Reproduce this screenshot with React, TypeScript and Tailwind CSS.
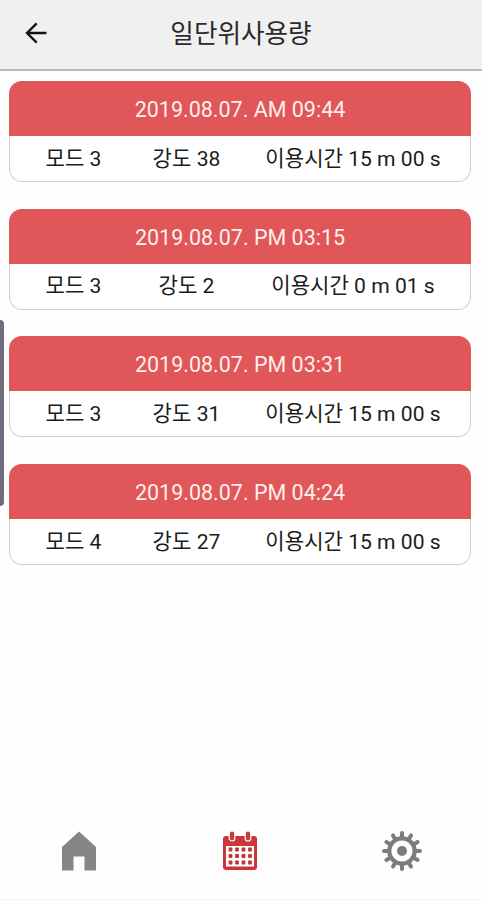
interface UsageRecord {
  date: string;
  mode: number;
  strength: number;
  time: string;
}

const records: UsageRecord[] = [
  { date: "2019.08.07. AM 09:44", mode: 3, strength: 38, time: "15 m 00 s" },
  { date: "2019.08.07. PM 03:15", mode: 3, strength: 2, time: "0 m 01 s" },
  { date: "2019.08.07. PM 03:31", mode: 3, strength: 31, time: "15 m 00 s" },
  { date: "2019.08.07. PM 04:24", mode: 4, strength: 27, time: "15 m 00 s" },
];

const BackIcon = () => (
  <svg
    className="size-6"
    viewBox="0 0 24 24"
    fill="none"
    stroke="#111"
    strokeWidth="2.4"
  >
    <path d="M22.500 12H3M12.700 2.300L3 12l9.700 9.700" />
  </svg>
);

const HomeIcon = () => (
  <svg width="36" height="40" viewBox="0 0 36 40">
    <path
      d="M18 .5L35 16v23.500H23.500V25.500h-11v14H1V16z"
      fill="#858585"
    />
  </svg>
);

const CalendarIcon = () => (
  <svg width="36" height="40" viewBox="0 0 36 40">
    <path
      d="M4 5h28a3 3 0 0 1 3 3v28a3 3 0 0 1-3 3H4a3 3 0 0 1-3-3V8a3 3 0 0 1 3-3z"
      fill="#cb363b"
    />
    <path d="M4 15h28v20.500H4z" fill="#fff" />
    {/* Binder rings */}
    {[10, 26].map((x) => (
      <rect
        key={x}
        x={x - 2.8}
        y="0"
        width="5.600"
        height="10"
        rx="2.800"
        fill="#cb363b"
        stroke="#fff"
        strokeWidth="1.200"
      />
    ))}
    {/* Days */}
    {[18.5, 25, 31.5].map((y) =>
      [8.5, 15, 21.5, 28].map((x) => (
        <rect
          key={`${x}-${y}`}
          x={x - 1.9}
          y={y - 1.9}
          width="3.800"
          height="3.800"
          rx=".6"
          fill="#c4323a"
        />
      ))
    )}
  </svg>
);

const SettingsIcon = () => (
  <svg width="40" height="40" viewBox="0 0 40 40">
    {Array.from({ length: 12 }, (_, i) => (
      <line
        key={i}
        x1="20"
        y1="2"
        x2="20"
        y2="7"
        stroke="#7c7c7c"
        strokeWidth="4"
        strokeLinecap="round"
        transform={`rotate(${i * 30} 20 20)`}
      />
    ))}
    <circle
      cx="20"
      cy="20"
      r="12.700"
      fill="none"
      stroke="#7c7c7c"
      strokeWidth="4.200"
    />
    <circle cx="20" cy="20" r="5" fill="#7c7c7c" />
  </svg>
);

const UsageCard = ({ record }: { record: UsageRecord }) => (
  <article className="h-[101px] shrink-0 overflow-hidden rounded-[13px] bg-[#cfcfcf] p-px pt-0">
    <div className="-mx-px flex h-[55px] items-center justify-center bg-[#e05659] pt-[3px] text-[21.5px] text-[#fff0ee]">
      <p className="whitespace-nowrap">{record.date}</p>
    </div>
    <div className="flex h-[45px] items-center rounded-b-[12px] bg-white text-center text-[21.1px] whitespace-nowrap text-[#1c1c1c]">
      <p className="w-[127px]">모드 {record.mode}</p>
      <p className="w-[99px]">강도 {record.strength}</p>
      <p className="flex-1">이용시간 {record.time}</p>
    </div>
  </article>
);

const App = () => {
  return (
    <div className="relative flex h-[900px] w-[482px] flex-col overflow-hidden bg-[#fefefe] font-[Roboto,'Noto_Sans_CJK_KR',sans-serif]">
      <header className="grid h-[71px] shrink-0 grid-cols-[1fr_auto_1fr] items-center border-b-2 border-[#b9b9b9] bg-[#f0f0f0] px-6 pb-1">
        <button type="button" aria-label="뒤로" className="w-6">
          <BackIcon />
        </button>
        <h1 className="pt-1 text-[25.6px] text-[#2a2a2a]">일단위사용량</h1>
      </header>

      <main className="flex flex-1 flex-col gap-[26.67px] pt-[10px] pr-[11px] pl-[9px]">
        {records.map((record) => (
          <UsageCard key={record.date} record={record} />
        ))}
      </main>

      {/* Edge panel handle */}
      <div className="absolute top-[320px] left-0 h-[186px] w-[4px] rounded-r-[4px] bg-[#706b7d]" />

      <nav className="flex h-[97px] shrink-0 justify-between border-b border-[#f3f3f3] pt-[28px] pr-[60px] pl-[61px]">
        <button type="button" aria-label="홈" className="h-10">
          <HomeIcon />
        </button>
        <button type="button" aria-label="사용량" className="h-10">
          <CalendarIcon />
        </button>
        <button type="button" aria-label="설정" className="h-10">
          <SettingsIcon />
        </button>
      </nav>
    </div>
  );
};

export default App;
